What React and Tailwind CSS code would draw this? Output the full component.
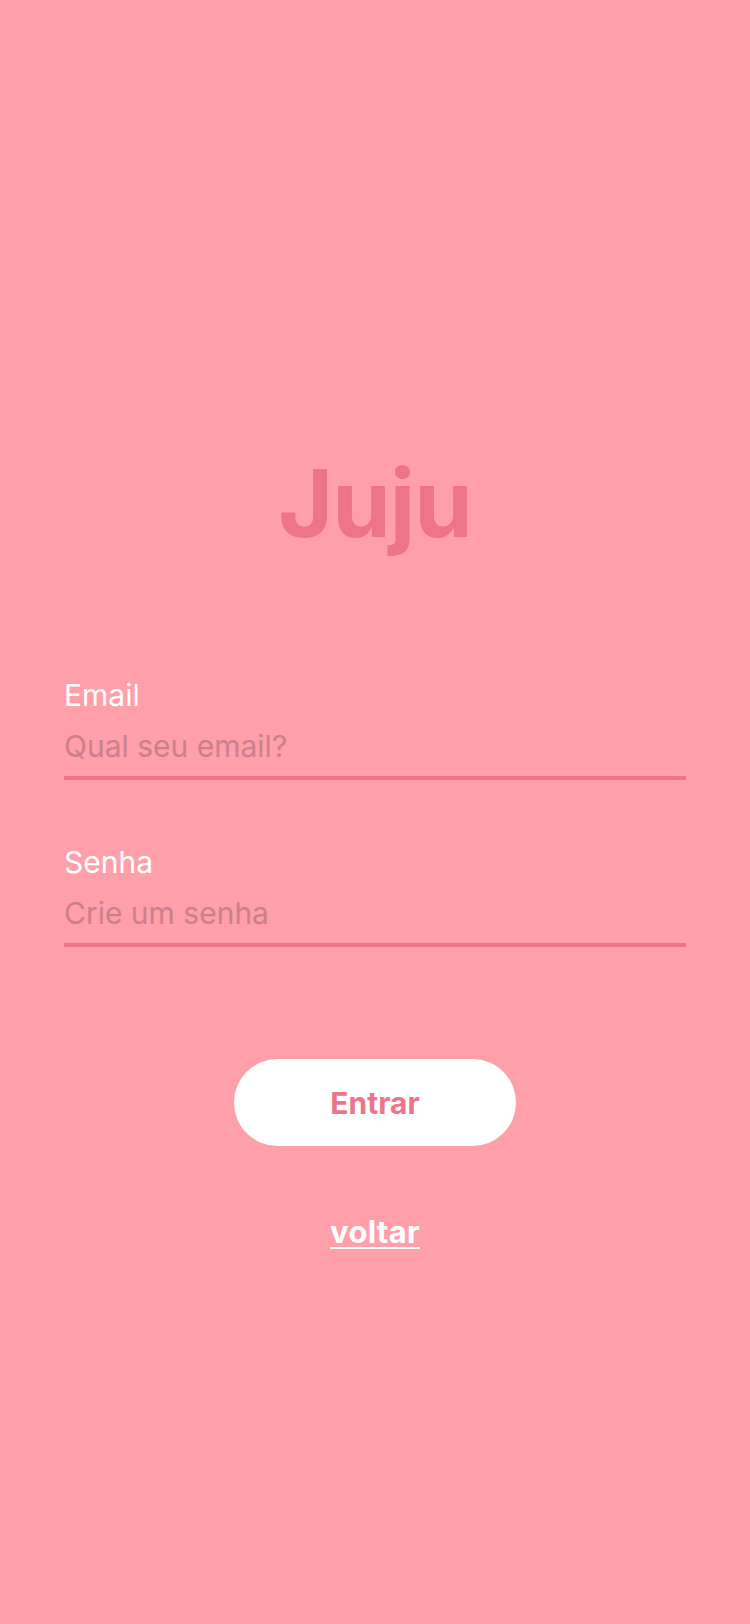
export default function App() {
  return (
    <div
      className="min-h-[1624px] w-full bg-[#fe9fa9] flex flex-col items-center"
      style={{ fontFamily: "Inter, 'Open Sans', sans-serif" }}
    >
      <h1 className="mt-[456px] text-[94px] leading-none font-bold text-[#ee7589] tracking-[-1px]">
        Juju
      </h1>

      <form className="w-full px-[64px] mt-[130px] flex flex-col" onSubmit={(e) => e.preventDefault()}>
        <label className="block text-[30px] leading-none text-white">Email</label>
        <input
          type="email"
          placeholder="Qual seu email?"
          className="mt-[18px] w-full bg-transparent text-[30px] leading-none text-white placeholder:text-[#cd808c] pb-[12px] border-b-4 border-[#ee7589] outline-none"
        />

        <label className="block mt-[67px] text-[30px] leading-none text-white">Senha</label>
        <input
          type="password"
          placeholder="Crie um senha"
          className="mt-[18px] w-full bg-transparent text-[30px] leading-none text-white placeholder:text-[#cd808c] pb-[12px] border-b-4 border-[#ee7589] outline-none"
        />

        <div className="flex flex-col items-center">
          <button
            type="submit"
            className="mt-[112px] w-[282px] h-[87px] rounded-[44px] bg-white text-[#ee7589] text-[30px] font-bold leading-none"
          >
            Entrar
          </button>
          <a
            href="#"
            className="mt-[70px] text-[31px] font-bold leading-none text-white underline decoration-[2px] underline-offset-[4px] tracking-[0.3px]"
          >
            voltar
          </a>
        </div>
      </form>
    </div>
  );
}
